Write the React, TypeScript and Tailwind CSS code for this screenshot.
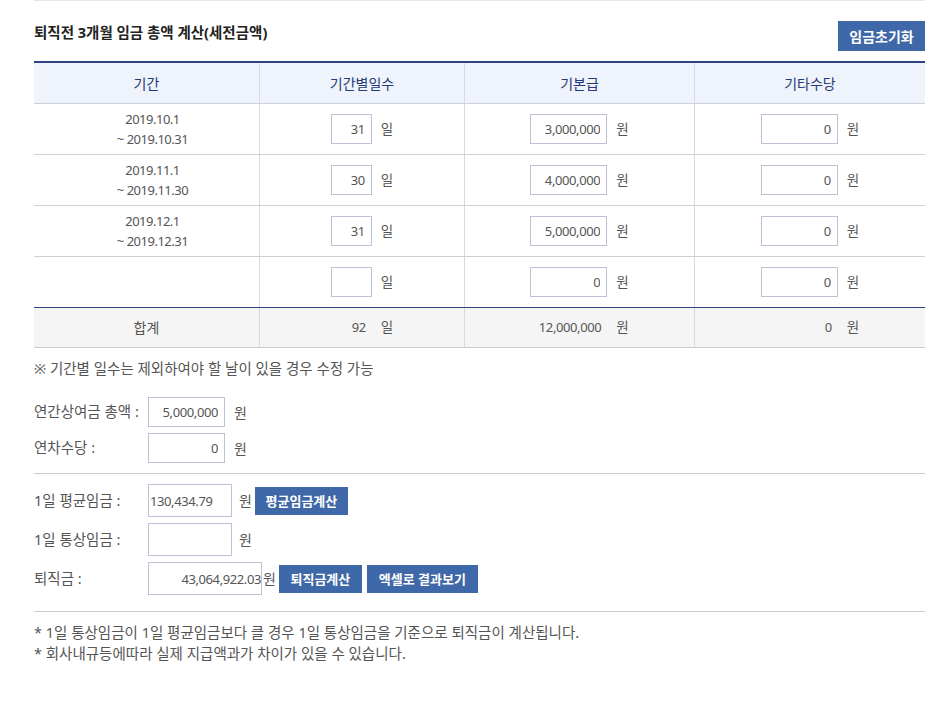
import React from "react";

const FONT = "font-['Noto_Sans','Noto_Sans_CJK_KR',sans-serif]";

function Cell({ children, first = false, bg = "" }: { children?: React.ReactNode; first?: boolean; bg?: string }) {
  return (
    <div className={`flex items-center justify-center ${first ? "" : "border-l border-[#d9dae0]"} ${bg}`}>
      {children}
    </div>
  );
}

function NumInput({ value, w }: { value: string; w: string }) {
  return (
    <input
      readOnly
      value={value}
      className={`${w} h-[30px] border border-[#bcc3d6] bg-white text-right pr-[6px] text-[13px] tracking-[-0.4px] text-[#555] outline-none`}
    />
  );
}

function Unit({ children }: { children: React.ReactNode }) {
  return <span className="ml-[9px] text-[13.5px] text-[#555]">{children}</span>;
}

const rows = [
  { from: "2019.10.1", to: "~ 2019.10.31", days: "31", base: "3,000,000", etc: "0" },
  { from: "2019.11.1", to: "~ 2019.11.30", days: "30", base: "4,000,000", etc: "0" },
  { from: "2019.12.1", to: "~ 2019.12.31", days: "31", base: "5,000,000", etc: "0" },
  { from: "", to: "", days: "", base: "0", etc: "0" },
];

const grid = "grid grid-cols-[225px_205px_230px_231px]";

function Btn({ children, w }: { children: React.ReactNode; w: string }) {
  return (
    <button className={`${w} h-[28px] bg-[#3f68a8] text-white font-bold text-[13px] leading-[28px]`}>
      {children}
    </button>
  );
}

export default function App() {
  return (
    <div className={`w-[945px] min-h-[711px] bg-white ${FONT} text-[#555]`}>
      <div className="ml-[34px] w-[891px]">
        <div className="h-px bg-[#e3e7ef]" />
        <div className="flex justify-between items-start pt-[20px]">
          <h2 className="mt-[1px] text-[14.5px] leading-[20px] font-bold text-[#222]">
            퇴직전 3개월 임금 총액 계산(세전금액)
          </h2>
          <button className="w-[87px] h-[30px] bg-[#3f68a8] text-white font-bold text-[14px]">임금초기화</button>
        </div>

        <div className="mt-[10px] border-t-2 border-[#2e4283]">
          <div className={`${grid} h-[40px] bg-[#eff3fb] text-[14px] text-[#233a76]`}>
            <Cell first>기간</Cell>
            <Cell>기간별일수</Cell>
            <Cell>기본급</Cell>
            <Cell>기타수당</Cell>
          </div>
          {rows.map((r, i) => (
            <div key={i} className={`${grid} h-[51px] border-t border-[#cfd1d8]`}>
              <Cell first>
                <div className="pl-[12px] text-center text-[13px] leading-[20px] tracking-[-0.5px] text-[#555]">
                  <div>{r.from}</div>
                  <div>{r.to}</div>
                </div>
              </Cell>
              <Cell>
                <div className="flex items-center">
                  <NumInput value={r.days} w="w-[41px]" />
                  <Unit>일</Unit>
                </div>
              </Cell>
              <Cell>
                <div className="flex items-center">
                  <NumInput value={r.base} w="w-[77px]" />
                  <Unit>원</Unit>
                </div>
              </Cell>
              <Cell>
                <div className="flex items-center">
                  <NumInput value={r.etc} w="w-[77px]" />
                  <Unit>원</Unit>
                </div>
              </Cell>
            </div>
          ))}
          <div className={`${grid} h-[41px] border-t border-[#2e4283] border-b border-b-[#cccccc] bg-[#f5f5f5] text-[13px] text-[#555]`}>
            <Cell first>
              <span className="text-[14px]">합계</span>
            </Cell>
            <Cell>
              <div className="flex items-center">
                <span className="w-[41px] text-right pr-[6px] tracking-[-0.4px]">92</span>
                <Unit>일</Unit>
              </div>
            </Cell>
            <Cell>
              <div className="flex items-center">
                <span className="w-[77px] text-right pr-[6px] tracking-[-0.4px]">12,000,000</span>
                <Unit>원</Unit>
              </div>
            </Cell>
            <Cell>
              <div className="flex items-center">
                <span className="w-[77px] text-right pr-[6px] tracking-[-0.4px]">0</span>
                <Unit>원</Unit>
              </div>
            </Cell>
          </div>
        </div>

        <p className="mt-[10px] text-[14.5px] leading-[20px] text-[#555]">
          ※ 기간별 일수는 제외하여야 할 날이 있을 경우 수정 가능
        </p>

        <div className="mt-[19px] flex flex-col gap-[6px] text-[14.5px]">
          <div className="flex items-center">
            <span className="w-[114px]">연간상여금 총액 :</span>
            <NumInput value="5,000,000" w="w-[77px]" />
            <span className="ml-[9px] text-[14px]">원</span>
          </div>
          <div className="flex items-center">
            <span className="w-[114px]">연차수당 :</span>
            <NumInput value="0" w="w-[77px]" />
            <span className="ml-[9px] text-[14px]">원</span>
          </div>
        </div>

        <div className="mt-[10px] h-px bg-[#cccccc]" />

        <div className="mt-[10px] flex flex-col gap-[6px] text-[14.5px]">
          <div className="flex items-center">
            <span className="w-[114px]">1일 평균임금 :</span>
            <input
              readOnly
              value="130,434.79"
              className="w-[84px] h-[33px] border border-[#bcc3d6] pl-[1px] text-[13px] tracking-[-0.4px] text-[#555] outline-none"
            />
            <span className="ml-[7px] text-[14px]">원</span>
            <span className="ml-[3px]">
              <Btn w="w-[93px]">평균임금계산</Btn>
            </span>
          </div>
          <div className="flex items-center">
            <span className="w-[114px]">1일 통상임금 :</span>
            <input
              readOnly
              value=""
              className="w-[84px] h-[33px] border border-[#bcc3d6] text-[13px] text-[#555] outline-none"
            />
            <span className="ml-[7px] text-[14px]">원</span>
          </div>
          <div className="flex items-center">
            <span className="w-[114px]">퇴직금 :</span>
            <input
              readOnly
              value="43,064,922.03"
              className="w-[114px] h-[33px] border border-[#bcc3d6] text-right pr-0 text-[13px] tracking-[-0.4px] text-[#555] outline-none"
            />
            <span className="ml-[1px] text-[14px]">원</span>
            <span className="ml-[3px] flex gap-[5px]">
              <Btn w="w-[83px]">퇴직금계산</Btn>
              <Btn w="w-[111px]">엑셀로 결과보기</Btn>
            </span>
          </div>
        </div>

        <div className="mt-[16px] h-px bg-[#cccccc]" />

        <div className="mt-[10px] text-[14.5px] leading-[21px] text-[#555]">
          <p>* 1일 통상임금이 1일 평균임금보다 클 경우 1일 통상임금을 기준으로 퇴직금이 계산됩니다.</p>
          <p>* 회사내규등에따라 실제 지급액과가 차이가 있을 수 있습니다.</p>
        </div>
      </div>
    </div>
  );
}
